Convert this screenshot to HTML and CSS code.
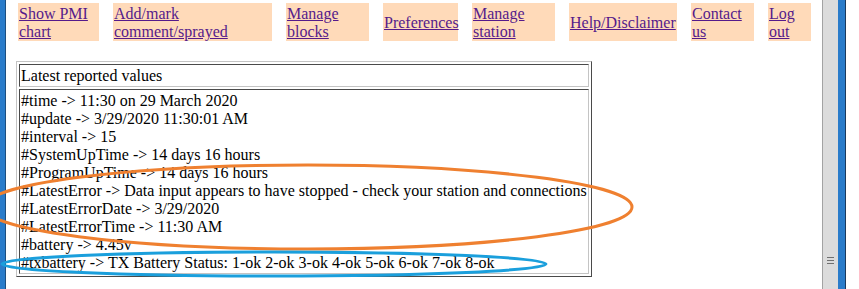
FILE: index.html
```html
<!DOCTYPE html>
<html lang="en">
<head>
    <meta charset="UTF-8">
    <title>Station values</title>
    <link rel="stylesheet" href="styles.css">
</head>
<body>
<div class="window">
    <div class="frame-left"></div>

    <div class="page">
        <!-- menu -->
        <div class="nav">
            <div class="nav-cell w1"><a href="#">Show PMI chart</a></div>
            <div class="nav-cell w2"><a href="#">Add/mark comment/sprayed</a></div>
            <div class="nav-cell w3"><a href="#">Manage blocks</a></div>
            <div class="nav-cell w4"><a href="#">Preferences</a></div>
            <div class="nav-cell w5"><a href="#">Manage station</a></div>
            <div class="nav-cell w6"><a href="#">Help/Disclaimer</a></div>
            <div class="nav-cell w7"><a href="#">Contact us</a></div>
            <div class="nav-cell w8"><a href="#">Log out</a></div>
        </div>

        <!-- values -->
        <table class="values">
            <tr><td>Latest reported values</td></tr>
            <tr><td>
                #time -&gt; 11:30 on 29 March 2020<br>
                #update -&gt; 3/29/2020 11:30:01 AM<br>
                #interval -&gt; 15<br>
                #SystemUpTime -&gt; 14 days 16 hours<br>
                #ProgramUpTime -&gt; 14 days 16 hours<br>
                #LatestError -&gt; Data input appears to have stopped - check your station and connections<br>
                #LatestErrorDate -&gt; 3/29/2020<br>
                #LatestErrorTime -&gt; 11:30 AM<br>
                #battery -&gt; 4.45v<br>
                #txbattery -&gt; TX Battery Status: 1-ok 2-ok 3-ok 4-ok 5-ok 6-ok 7-ok 8-ok
            </td></tr>
        </table>
    </div>

    <div class="scrollbar"><span class="grip"></span></div>
    <div class="frame-right"></div>
    <div class="outside"></div>

    <!-- hand drawn marks -->
    <svg class="marks" width="859" height="289" viewBox="0 0 859 289">
        <ellipse cx="308" cy="207" rx="324" ry="42" fill="none" stroke="#ef8030" stroke-width="3"/>
        <ellipse cx="274" cy="264" rx="272" ry="12" fill="none" stroke="#1a9fdc" stroke-width="3"/>
    </svg>
</div>
</body>
</html>
```

FILE: styles.css
```css
body{
    margin: 0;
    font-family: "Liberation Serif", "Times New Roman", serif;
    font-size: 16px;
    background: #fff;
    overflow: hidden;
}
.window{
    position: relative;
    display: flex;
    height: 289px;
}
.frame-left{
    width: 5px;
    background: #2a7cca;
    border-right: 1px solid #1d4f80;
}
.page{
    width: 816px;
    background: #fff;
}
.scrollbar{
    position: relative;
    width: 15px;
    background: #dcdcdc;
    border-left: 1px solid #a3a3a3;
}
.scrollbar .grip{
    position: absolute;
    left: 4px;
    top: 257px;
    width: 7px;
    height: 1px;
    background: #707070;
    box-shadow: 0 3px 0 #707070, 0 6px 0 #707070;
}
.frame-right{
    width: 7px;
    background: #2a7cca;
    border-right: 1px solid #1a3a5e;
}
.outside{
    width: 13px;
    background: #fff;
}
.marks{
    position: absolute;
    left: 0;
    top: 0;
    pointer-events: none;
}

/* menu */
.nav{
    display: flex;
    gap: 14px;
    padding: 3px 0 0 12px;
}
.nav-cell{
    display: flex;
    align-items: center;
    height: 38px;
    padding: 2px 1px 0;
    box-sizing: border-box;
    background: #ffdab9;
    line-height: 18px;
}
.nav-cell a{
    color: #551a8b;
}
.w1{ width: 81px; }
.w2{ width: 159px; }
.w3{ width: 83px; }
.w4{ width: 75px; }
.w5{ width: 83px; }
.w6{ width: 108px; }
.w7{ width: 63px; }
.w8{ width: 43px; }

/* values */
.values{
    margin: 20px 0 0 10px;
    border: 1px solid;
    border-color: #c4c4c4 #4a4a4a #4a4a4a #c4c4c4;
    border-spacing: 2px;
    line-height: 18px;
}
.values td{
    padding: 2px 1px 1px;
    border: 1px solid;
    border-color: #4a4a4a #c4c4c4 #c4c4c4 #4a4a4a;
}
```
